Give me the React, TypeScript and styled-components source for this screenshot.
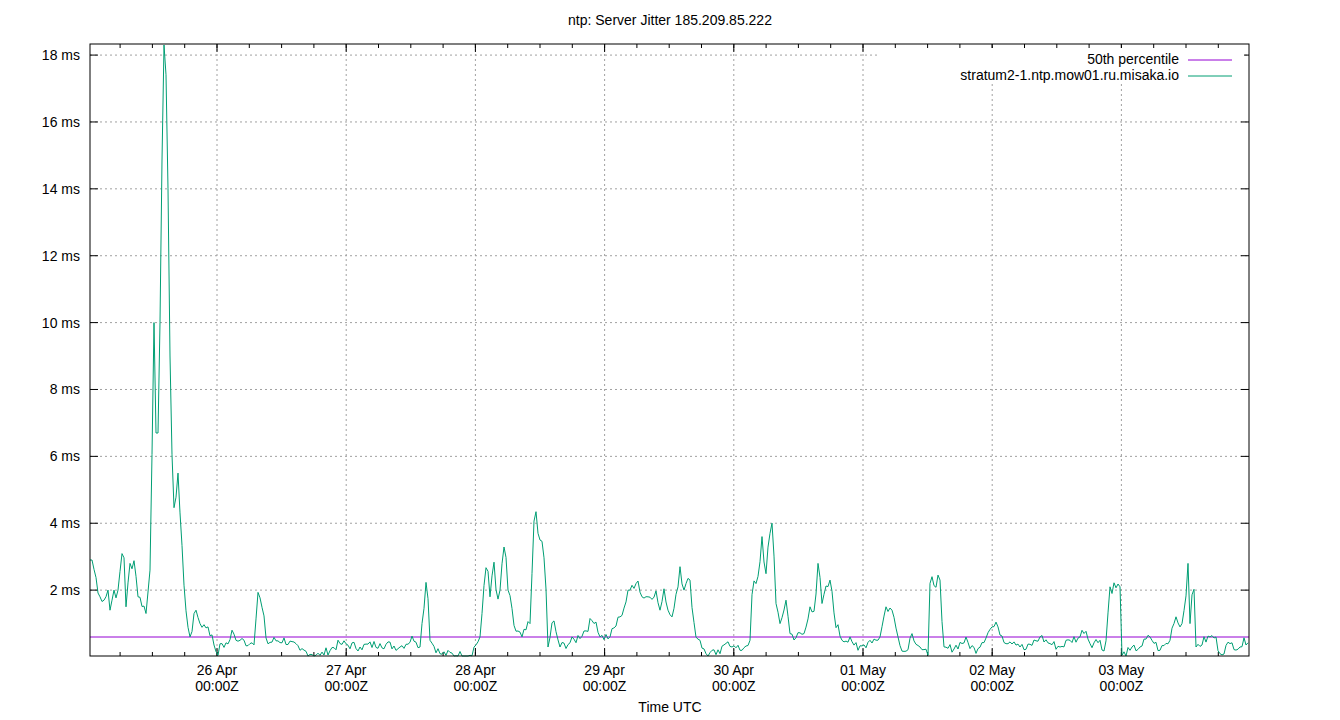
import React from "react";
import styled, { createGlobalStyle } from "styled-components";

const Global = createGlobalStyle`
  html, body { margin: 0; padding: 0; background: #fff; }
  body { font-family: "Liberation Sans", Arial, sans-serif; }
`;

const Figure = styled.div`
  width: 1340px;
  height: 720px;
  background: #fff;
  display: flex;
`;

const Chart = styled.svg`
  display: block;
  font-family: "Liberation Sans", Arial, sans-serif;
  font-size: 14px;
  fill: #000;
`;

const L = 90, R = 1249, T = 44, B = 656;
const y0 = 657, pxPerMs = 33.44;
const ym = (ms: number) => y0 - ms * pxPerMs;

const keys: [number, number][] = [
[90,2.9],[92,2.9],[100,1.8],[105,1.7],[108,2.0],[110,1.4],[113,2.1],[115,1.6],[118,2.0],[123,3.5],[126,1.5],[130,2.8],[135,2.9],[138,1.8],[143,1.6],[146,1.3],[150,2.6],[154,10],[156,6.7],[158,6.7],[160,10],[163,18.3],[165,18],[168,14],[170,9],[173,5],[175,4],[178,5.5],[181,4],[185,1.5],[190,0.6],[196,1.4],[200,1.0],[208,0.9],[213,0.5],[217,0.1],[222,0.4],[227,0.3],[232,0.8],[236,0.5],[240,0.5],[250,0.4],[255,0.5],[257,2.1],[263,1.3],[267,0.4],[275,0.5],[285,0.5],[300,0.2],[320,0.05],[340,0.4],[360,0.3],[380,0.4],[400,0.3],[415,0.6],[420,0.3],[427,2.6],[430,0.5],[440,0.1],[470,0.05],[480,0.6],[487,3.0],[490,1.8],[493,3.0],[497,1.6],[500,2.0],[505,3.5],[508,2.0],[515,0.8],[522,0.6],[530,1.0],[535,4.6],[540,3.5],[545,2.8],[548,0.3],[553,1.1],[560,0.3],[575,0.5],[585,0.8],[595,1.2],[600,0.6],[610,0.6],[620,1.2],[630,2.0],[637,2.4],[642,1.8],[648,1.8],[655,2.0],[660,1.4],[665,2.0],[668,1.4],[672,1.2],[677,2.1],[680,2.7],[684,2.0],[690,2.3],[695,0.7],[700,0.5],[705,0.1],[720,0.1],[727,0.6],[732,0.3],[740,0.2],[750,0.5],[753,2.3],[757,2.0],[762,3.6],[765,2.4],[770,3.7],[772,4.0],[776,1.6],[780,1.0],[786,1.7],[790,0.7],[795,0.6],[805,0.7],[810,1.5],[815,1.5],[818,2.8],[822,1.6],[830,2.3],[835,1.1],[842,0.5],[850,0.6],[858,0.2],[870,0.5],[880,0.6],[886,1.5],[892,1.4],[898,0.6],[905,0.1],[912,0.7],[920,0.3],[928,0.05],[930,2.2],[935,2.3],[940,2.3],[943,0.2],[955,0.3],[965,0.5],[975,0.2],[985,0.6],[992,0.9],[998,0.9],[1005,0.5],[1015,0.5],[1025,0.2],[1040,0.6],[1050,0.4],[1060,0.3],[1070,0.5],[1080,0.6],[1085,0.9],[1090,0.4],[1100,0.5],[1105,0.1],[1110,2.1],[1120,2.1],[1122,0.05],[1130,0.2],[1140,0.3],[1150,0.6],[1160,0.2],[1170,0.5],[1175,1.3],[1180,0.9],[1185,1.5],[1188,2.8],[1190,1.0],[1193,2.6],[1196,0.3],[1205,0.5],[1210,0.6],[1215,0.6],[1220,0.1],[1230,0.4],[1240,0.3],[1249,0.6]];

function buildPath(): string {
  let seed = 7;
  const rnd = () => { seed = (seed * 9301 + 49297) % 233280; return seed / 233280 - 0.5; };
  const pts: string[] = [];
  let k = 0;
  for (let x = L; x <= R; x += 2) {
    while (k < keys.length - 2 && keys[k + 1][0] <= x) k++;
    const [x1, v1] = keys[k], [x2, v2] = keys[k + 1];
    const t = Math.min(1, Math.max(0, (x - x1) / (x2 - x1)));
    let v = v1 + (v2 - v1) * t;
    const isKey = keys.some(p => p[0] === x);
    if (!isKey) v += rnd() * (0.25 + v * 0.08);
    v = Math.max(0.03, v);
    const y = Math.max(T + 1, Math.min(B, ym(v)));
    pts.push(`${x},${y.toFixed(1)}`);
  }
  return "M" + pts.join(" L");
}

const yTicks = [2, 4, 6, 8, 10, 12, 14, 16, 18];
const days = ["26 Apr", "27 Apr", "28 Apr", "29 Apr", "30 Apr", "01 May", "02 May", "03 May"];
const dayX = (i: number) => 217 + i * 129.2;

export default function App() {
  const minor: number[] = [];
  for (let x = 217 - 4 * 32.3; x <= R; x += 32.3) if (x > L + 2) minor.push(x);
  const path = buildPath();
  return (
    <Figure>
      <Global />
      <Chart width={1340} height={720} viewBox="0 0 1340 720">
        <text x={670} y={25} textAnchor="middle">ntp: Server Jitter 185.209.85.222</text>
        {yTicks.map(v => (
          <g key={v}>
            <line x1={L} x2={R} y1={ym(v)} y2={ym(v)} stroke="#a0a0a0" strokeDasharray="2,3" />
            <line x1={L} x2={L + 8} y1={ym(v)} y2={ym(v)} stroke="#000" />
            <line x1={R - 8} x2={R} y1={ym(v)} y2={ym(v)} stroke="#000" />
            <text x={80} y={ym(v) + 5} textAnchor="end">{v} ms</text>
          </g>
        ))}
        {minor.map((x, i) => (
          <g key={i}>
            <line x1={x} x2={x} y1={B} y2={B - 4} stroke="#000" />
            <line x1={x} x2={x} y1={T} y2={T + 4} stroke="#000" />
          </g>
        ))}
        {days.map((d, i) => (
          <g key={d}>
            <line x1={dayX(i)} x2={dayX(i)} y1={T} y2={B} stroke="#a0a0a0" strokeDasharray="2,3" />
            <line x1={dayX(i)} x2={dayX(i)} y1={B} y2={B - 8} stroke="#000" />
            <line x1={dayX(i)} x2={dayX(i)} y1={T} y2={T + 8} stroke="#000" />
            <text x={dayX(i)} y={675} textAnchor="middle">{d}</text>
            <text x={dayX(i)} y={691} textAnchor="middle">00:00Z</text>
          </g>
        ))}
        <rect x={880} y={48} width={364} height={36} fill="#fff" />
        <line x1={L} x2={R} y1={637} y2={637} stroke="#9400d3" strokeWidth={1} />
        <path d={path} fill="none" stroke="#009e73" strokeWidth={1} />
        <rect x={L} y={T} width={R - L} height={B - T} fill="none" stroke="#000" />
        <text x={1179} y={64} textAnchor="end">50th percentile</text>
        <line x1={1188} x2={1232} y1={60} y2={60} stroke="#9400d3" />
        <text x={1179} y={80} textAnchor="end">stratum2-1.ntp.mow01.ru.misaka.io</text>
        <line x1={1188} x2={1232} y1={76} y2={76} stroke="#009e73" />
        <text x={670} y={712} textAnchor="middle">Time UTC</text>
      </Chart>
    </Figure>
  );
}
